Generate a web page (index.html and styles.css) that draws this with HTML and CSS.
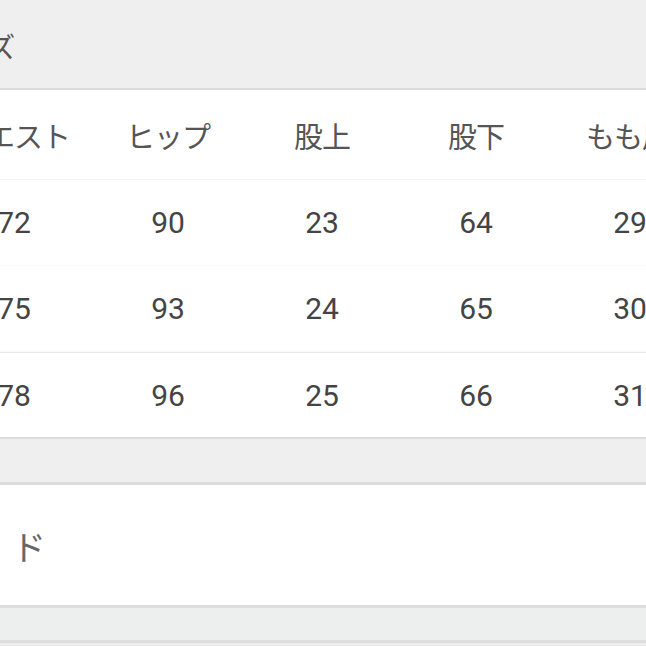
FILE: index.html
```html
<!DOCTYPE html>
<html lang="ja">
<head>
<meta charset="utf-8">
<link rel="stylesheet" href="styles.css">
</head>
<body>
<div class="page">
  <section class="band band-title">
    <span class="title">サイズ</span>
  </section>
  <div class="size-table">
    <div class="row row-head">
      <div class="cell">ウエスト</div>
      <div class="cell">ヒップ</div>
      <div class="cell">股上</div>
      <div class="cell">股下</div>
      <div class="cell cell-wide">もも周り</div>
    </div>
    <div class="row">
      <div class="cell num">72</div>
      <div class="cell num">90</div>
      <div class="cell num">23</div>
      <div class="cell num">64</div>
      <div class="cell num">29</div>
    </div>
    <div class="row">
      <div class="cell num">75</div>
      <div class="cell num">93</div>
      <div class="cell num">24</div>
      <div class="cell num">65</div>
      <div class="cell num">30</div>
    </div>
    <div class="row row-last">
      <div class="cell num">78</div>
      <div class="cell num">96</div>
      <div class="cell num">25</div>
      <div class="cell num">66</div>
      <div class="cell num">31</div>
    </div>
  </div>
  <div class="band band-gap"></div>
  <section class="field">
    <span class="field-label">ブランド</span>
  </section>
  <div class="band band-foot"></div>
</div>
</body>
</html>
```
FILE: styles.css
```css
html, body {
  margin: 0;
  padding: 0;
  background: #eeeeee;
}
body {
  width: 646px;
  height: 646px;
  overflow: hidden;
  font-family: "Noto Sans CJK JP", Roboto, sans-serif;
}
.page {
  display: flex;
  flex-direction: column;
  width: 646px;
}
.band {
  background: #efefef;
  border-bottom: 2px solid #dcdcdc;
}
.band-title {
  height: 88px;
  display: flex;
  align-items: center;
  overflow: hidden;
}
.title {
  margin-left: -68px;
  margin-top: 4px;
  font-size: 28px;
  color: #555555;
  white-space: nowrap;
}
.size-table {
  background: #ffffff;
  border-bottom: 2px solid #dcdcdc;
  overflow: hidden;
}
.row {
  display: grid;
  grid-template-columns: repeat(5, 154px);
  margin-left: -63px;
  height: 85px;
  border-bottom: 1px solid #fafafa;
}
.row-head {
  height: 89px;
  border-bottom: 1px solid #f4f4f4;
}
.row-last {
  border-bottom: none;
  border-top: 1px solid #e9e9e9;
  height: 84px;
}
.cell {
  display: flex;
  align-items: center;
  justify-content: center;
  white-space: nowrap;
  font-size: 29px;
  color: #555555;
}
.row-head .cell {
  letter-spacing: -1px;
}
.row-head .cell-wide {
  padding-left: 24px;
}
.num {
  font-family: Roboto, "Noto Sans", sans-serif;
  font-size: 30px;
  color: #444444;
}
.band-gap {
  height: 43px;
  border-bottom: 3px solid #dcdcdc;
}
.field {
  background: #ffffff;
  height: 120px;
  display: flex;
  align-items: center;
  overflow: hidden;
  border-bottom: 3px solid #dedede;
}
.field-label {
  margin-left: -120px;
  margin-top: 0;
  font-size: 34px;
  letter-spacing: 10px;
  color: #666666;
  white-space: nowrap;
}
.band-foot {
  height: 32px;
  border-bottom: 3px solid #dedede;
  background: #edeeee;
}
```
